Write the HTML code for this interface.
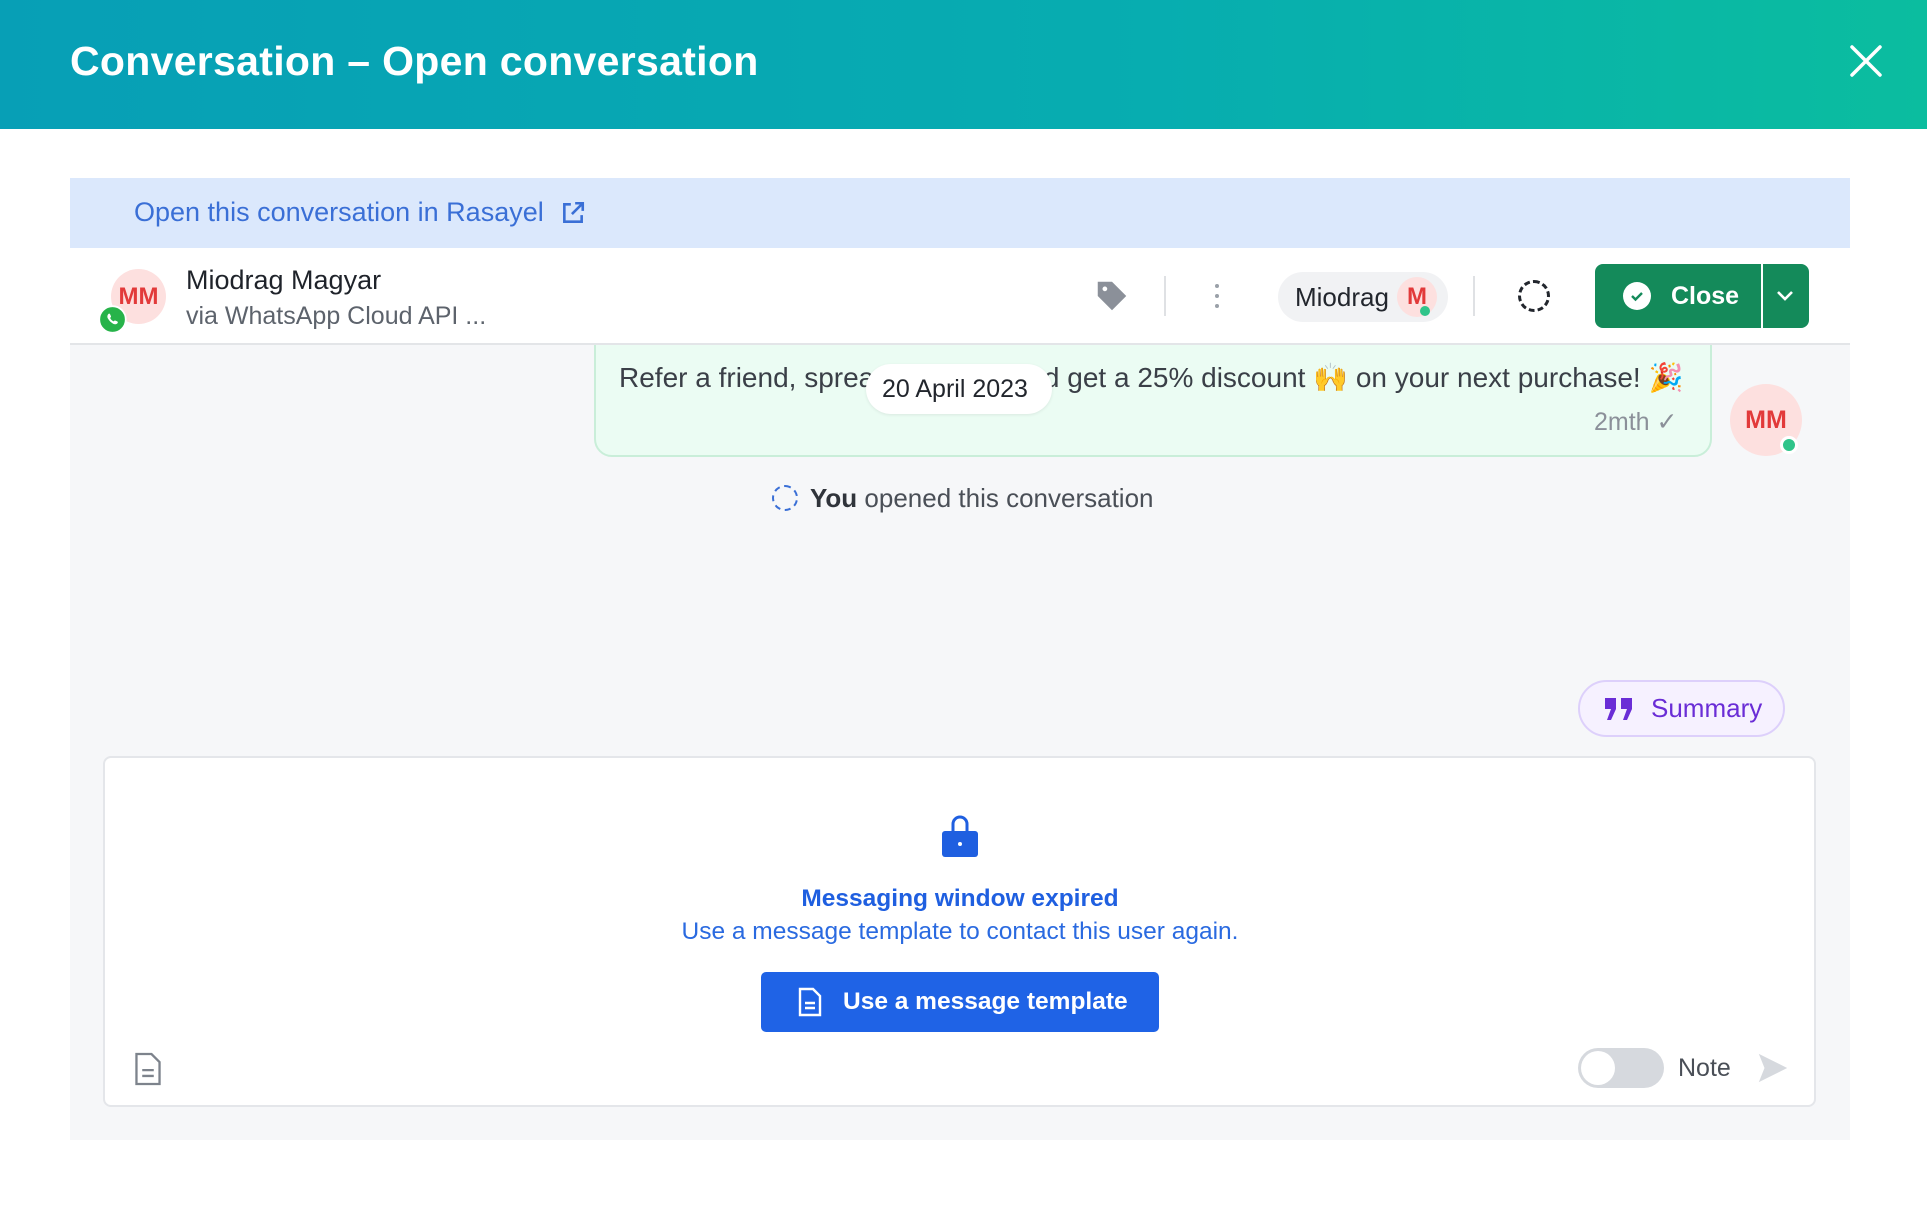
<!DOCTYPE html>
<html><head><meta charset="utf-8"><style>
*{margin:0;padding:0;box-sizing:border-box}
body{width:1927px;height:1227px;background:#fff;font-family:"Liberation Sans",sans-serif;position:relative;overflow:hidden}
.abs{position:absolute}
.hdr{left:0;top:0;width:1927px;height:129px;background:linear-gradient(90deg,#079fb6 0%,#07adb0 60%,#0bbd9f 100%)}
.title{left:70px;top:38px;color:#fff;font-size:41px;font-weight:bold;letter-spacing:0.3px}
.banner{left:70px;top:178px;width:1780px;height:70px;background:#dbe8fc}
.banner span{position:absolute;left:64px;top:19px;color:#3a6fd6;font-size:27px}
.row{left:70px;top:248px;width:1780px;height:97px;background:#fff;border-bottom:2px solid #e3e5e8}
.chat{left:70px;top:345px;width:1780px;height:795px;background:#f6f7f9}
.txt{color:#3a3f47;font-size:25px;white-space:nowrap}
</style></head><body>
<div class="abs hdr"></div>
<div class="abs title">Conversation – Open conversation</div>
<svg class="abs" style="left:1850px;top:45px" width="32" height="32" viewBox="0 0 32 32"><path d="M2 2L30 30M30 2L2 30" stroke="#fff" stroke-width="3.5" stroke-linecap="round"/></svg>

<div class="abs banner"><span>Open this conversation in Rasayel</span>
<svg style="position:absolute;left:490px;top:22px" width="26" height="26" viewBox="0 0 24 24" fill="none" stroke="#3a6fd6" stroke-width="2.4"><path d="M10 4H4v16h16v-6"/><path d="M14 3h7v7M21 3l-10 10"/></svg></div>

<div class="abs chat"></div>
<div class="abs" style="left:594px;top:320px;width:1118px;height:137px;background:#ebfcf3;border:2px solid #c9eed9;border-radius:0 0 18px 18px"></div>
<div class="abs txt" style="left:619px;top:313px;font-size:28px;color:#444">Hi, we have happy news, happy deal for you and our loyal customers 🎁</div>
<div class="abs txt" style="left:619px;top:361px;font-size:28px">Refer a friend, spread the word and get a 25% discount 🙌 on your next purchase! 🎉</div>
<div class="abs" style="left:866px;top:364px;width:186px;height:50px;border-radius:25px;background:#fff;box-shadow:0 1px 3px rgba(0,0,0,.08)"></div>
<div class="abs txt" style="left:882px;top:375px;color:#22262d;font-size:25px">20 April 2023</div>
<div class="abs row"></div>
<div class="abs" style="left:111px;top:269px;width:55px;height:55px;border-radius:50%;background:#fde0df;color:#e23a3a;font-weight:bold;font-size:24px;text-align:center;line-height:55px">MM</div>
<svg class="abs" style="left:98px;top:305px" width="29" height="29" viewBox="0 0 24 24"><circle cx="12" cy="12" r="11" fill="#27b34a" stroke="#fff" stroke-width="1.5"/><path d="M8.5 7.5c.5-.5 1.2-.4 1.5.2l.7 1.5c.2.4 0 .8-.3 1.1l-.4.4c.6 1.3 1.6 2.3 2.9 2.9l.4-.4c.3-.3.7-.5 1.1-.3l1.5.7c.6.3.7 1 .2 1.5-.9 1-2.4 1.1-3.6.4-1.8-1-3.3-2.5-4.3-4.3-.7-1.2-.6-2.7.3-3.7z" fill="#fff"/></svg>
<div class="abs txt" style="left:186px;top:265px;color:#1f232a;font-size:27px">Miodrag Magyar</div>
<div class="abs txt" style="left:186px;top:302px;color:#5d636c;font-size:25px">via WhatsApp Cloud API ...</div>

<svg class="abs" style="left:1093px;top:277px" width="38" height="38" viewBox="0 0 24 24"><path d="M3 3h9l9 9-9 9-9-9z" fill="#8b9099"/><circle cx="7.5" cy="7.5" r="1.5" fill="#fff"/></svg>
<div class="abs" style="left:1164px;top:276px;width:2px;height:40px;background:#dfe1e4"></div>
<div class="abs" style="left:1215px;top:284px;width:4px;height:4px;border-radius:2px;background:#9aa0a8;box-shadow:0 10px 0 #9aa0a8,0 20px 0 #9aa0a8"></div>
<div class="abs" style="left:1278px;top:272px;width:170px;height:50px;border-radius:25px;background:#f1f2f4"></div>
<div class="abs txt" style="left:1295px;top:282px;color:#22262d;font-size:26px">Miodrag</div>
<div class="abs" style="left:1397px;top:277px;width:40px;height:40px;border-radius:50%;background:#fde0df;color:#e23a3a;font-weight:bold;font-size:24px;text-align:center;line-height:40px">M</div>
<div class="abs" style="left:1420px;top:306px;width:10px;height:10px;border-radius:50%;background:#2fc48a"></div>
<div class="abs" style="left:1473px;top:276px;width:2px;height:40px;background:#dfe1e4"></div>
<div class="abs" style="left:1518px;top:280px;width:32px;height:32px;border-radius:50%;border:3px dashed #22262d"></div>
<div class="abs" style="left:1595px;top:264px;width:214px;height:64px;border-radius:8px;background:#148a5a"></div>
<div class="abs" style="left:1761px;top:264px;width:2px;height:64px;background:#fff"></div>
<div class="abs" style="left:1623px;top:282px;width:28px;height:28px;border-radius:50%;background:#fff"></div>
<svg class="abs" style="left:1629px;top:288px" width="16" height="16" viewBox="0 0 16 16"><path d="M3 8l3.5 3.5L13 5" stroke="#148a5a" stroke-width="2.4" fill="none"/></svg>
<div class="abs" style="left:1671px;top:282px;color:#fff;font-size:25px;font-weight:bold">Close</div>
<svg class="abs" style="left:1775px;top:288px" width="20" height="16" viewBox="0 0 20 16"><path d="M3 4l7 7 7-7" stroke="#fff" stroke-width="2.6" fill="none"/></svg>

<div class="abs txt" style="left:1594px;top:407px;color:#8b9099;font-size:25px">2mth ✓</div>
<div class="abs" style="left:1730px;top:384px;width:72px;height:72px;border-radius:50%;background:#fde0df;color:#e23a3a;font-weight:bold;font-size:25px;text-align:center;line-height:72px">MM</div>
<div class="abs" style="left:1780px;top:436px;width:18px;height:18px;border-radius:50%;background:#2fc48a;border:3px solid #fff"></div>
<div class="abs" style="left:772px;top:485px;width:26px;height:26px;border-radius:50%;border:2.5px dashed #3a6fd6"></div>
<div class="abs txt" style="left:810px;top:483px;color:#4a4f57;font-size:26px"><b style="color:#30343b">You</b> opened this conversation</div>

<div class="abs" style="left:1578px;top:680px;width:207px;height:57px;border-radius:29px;background:#f6f1ff;border:2px solid #ddd0fb"></div>
<svg class="abs" style="left:1604px;top:697px" width="30" height="24" viewBox="0 0 30 24"><path d="M1 1h11v11l-5 11H3l4-11H1zM17 1h11v11l-5 11h-4l4-11h-6z" fill="#6a2dd6"/></svg>
<div class="abs txt" style="left:1651px;top:693px;color:#6a2dd6;font-size:26px">Summary</div>

<div class="abs" style="left:103px;top:756px;width:1713px;height:351px;background:#fff;border:2px solid #e4e6ea;border-radius:8px"></div>
<svg class="abs" style="left:940px;top:812px" width="40" height="46" viewBox="0 0 40 46"><path d="M13 20v-8a7 7 0 0 1 14 0v8" stroke="#1f5fe0" stroke-width="3" fill="none"/><rect x="2" y="19" width="36" height="26" rx="3" fill="#1f5fe0"/><circle cx="20" cy="32" r="2" fill="#fff"/></svg>
<div class="abs" style="left:0;top:885px;width:1920px;text-align:center;color:#1f5fe0;font-size:24.5px;font-weight:bold">Messaging window expired</div>
<div class="abs" style="left:0;top:918px;width:1920px;text-align:center;color:#2a6ae0;font-size:24.5px">Use a message template to contact this user again.</div>
<div class="abs" style="left:761px;top:972px;width:398px;height:60px;border-radius:5px;background:#1f63e6"></div>
<svg class="abs" style="left:797px;top:987px" width="26" height="30" viewBox="0 0 26 30" fill="none" stroke="#fff" stroke-width="2.4"><path d="M3 2h13l7 7v19H3z"/><path d="M8 16h10M8 21h10"/></svg>
<div class="abs" style="left:843px;top:988px;color:#fff;font-size:24.5px;font-weight:bold">Use a message template</div>
<svg class="abs" style="left:133px;top:1051px" width="30" height="36" viewBox="0 0 26 30" fill="none" stroke="#7d838c" stroke-width="2"><path d="M3 2h13l7 7v19H3z"/><path d="M8 16h10M8 21h10"/></svg>
<div class="abs" style="left:1578px;top:1048px;width:86px;height:40px;border-radius:20px;background:#d6d9de"></div>
<div class="abs" style="left:1581px;top:1051px;width:34px;height:34px;border-radius:50%;background:#fff"></div>
<div class="abs txt" style="left:1678px;top:1054px;color:#4a4f57;font-size:25px">Note</div>
<svg class="abs" style="left:1756px;top:1051px" width="34" height="34" viewBox="0 0 24 24"><path d="M2 2l20 10L2 22l4-10z" fill="#d6d9de"/></svg>
</body></html>
